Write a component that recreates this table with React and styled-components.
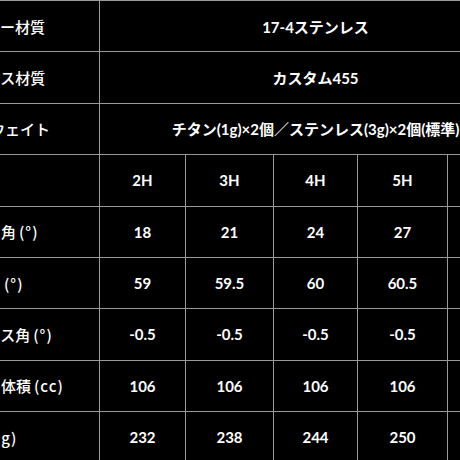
import styled, { createGlobalStyle } from "styled-components";

const GlobalStyle = createGlobalStyle`
  html, body {
    margin: 0;
    padding: 0;
    background: #000;
  }
`;

const Viewport = styled.div`
  width: 460px;
  height: 460px;
  overflow: hidden;
  background: #000;
`;

const SpecTable = styled.table`
  margin-left: -60px;
  border-collapse: collapse;
  table-layout: fixed;
  width: 591px;
  color: #fff;
  font-family: "Lato", "Noto Sans CJK JP", sans-serif;
  font-size: 15px;
  font-weight: 700;
`;

const Cell = styled.td`
  height: 51.375px;
  box-sizing: border-box;
  padding: 0;
  border: 1px solid #9a9a9a;
  text-align: center;
  vertical-align: middle;
  white-space: nowrap;
`;

const LabelCell = styled(Cell)`
  text-align: left;
  padding-left: ${(p) => p.$indent ?? 15}px;
  font-family: "Noto Sans CJK JP", sans-serif;
  font-weight: 500;
`;

/* 単位の括弧は少し広めに */
const Unit = styled.span`
  margin-left: 3px;
  letter-spacing: 1px;
`;

const columns = [159, 86, 88, 84, 90, 84];

const wideRows = [
  { label: "ボディー材質", value: "17-4ステンレス" },
  { label: "フェース材質", value: "カスタム455" },
  { label: "交換ウェイト", value: "チタン(1g)×2個／ステンレス(3g)×2個(標準)", indent: 19 },
];

const clubRows = [
  { label: "番手", values: ["2H", "3H", "4H", "5H", "6H"] },
  { label: "ロフト角", unit: "(°)", values: ["18", "21", "24", "27", "30"] },
  { label: "ライ角", unit: "(°)", values: ["59", "59.5", "60", "60.5", "61"] },
  { label: "フェース角", unit: "(°)", values: ["-0.5", "-0.5", "-0.5", "-0.5", "-0.5"] },
  { label: "ヘッド体積", unit: "(cc)", values: ["106", "106", "106", "106", "106"] },
  { label: "総重量", unit: "(g)", values: ["232", "238", "244", "250", "256"], indent: 6 },
];

export default function App() {
  return (
    <Viewport>
      <GlobalStyle />
      <SpecTable>
        <colgroup>
          {columns.map((w, i) => (
            <col key={i} style={{ width: w }} />
          ))}
        </colgroup>
        <tbody>
          {wideRows.map((row) => (
            <tr key={row.label}>
              <LabelCell $indent={row.indent}>{row.label}</LabelCell>
              <Cell colSpan={5}>{row.value}</Cell>
            </tr>
          ))}
          {clubRows.map((row) => (
            <tr key={row.label}>
              <LabelCell $indent={row.indent}>
                {row.label}
                {row.unit && <Unit>{row.unit}</Unit>}
              </LabelCell>
              {row.values.map((v, i) => (
                <Cell key={i}>{v}</Cell>
              ))}
            </tr>
          ))}
        </tbody>
      </SpecTable>
    </Viewport>
  );
}
